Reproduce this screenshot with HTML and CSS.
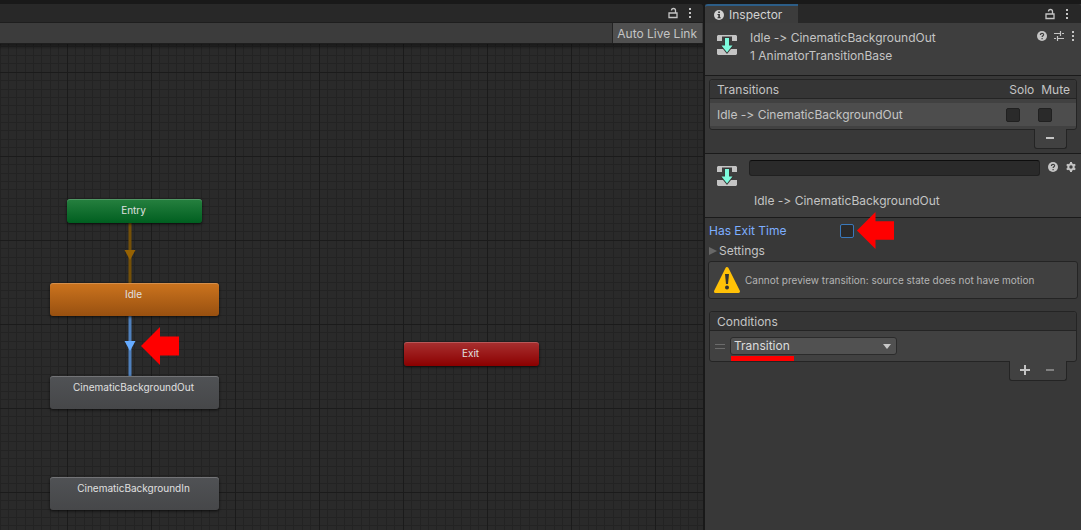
FILE: index.html
```html
<!DOCTYPE html>
<html lang="en">
<head>
<meta charset="utf-8">
<title>Animator</title>
<link rel="stylesheet" href="styles.css">
</head>
<body>
<svg class="defs" aria-hidden="true">
  <symbol id="lock" viewBox="0 0 10 12"><path d="M1 6h8v4.500H1zM7.500 6V3.500Q7.500 1.500 5.500 1.500Q3.500 1.500 3.500 3.500" fill="none" stroke="currentColor" stroke-width="1.300"/></symbol>
  <symbol id="dots" viewBox="0 0 4 12"><path d="M1 1h2v2H1zM1 5h2v2H1zM1 9h2v2H1z" fill="currentColor"/></symbol>
  <symbol id="transition" viewBox="0 0 22 22">
    <path d="M2 1h18l1 1v5h-5V2.500H6V7H1V2zM1 15h20v5l-1 1H2l-1-1z" fill="currentColor"/>
    <path d="M9 4h4v7.500h3.500L11 18.500 5.500 11.500H9z" fill="#7dfbdd" stroke="#383838" stroke-width="2" paint-order="stroke"/>
  </symbol>
  <symbol id="help" viewBox="0 0 10 10"><circle cx="5" cy="5" r="5" fill="currentColor"/><path d="M3.400 3.900C3.400 1.700 6.700 1.800 6.600 3.800C6.500 4.900 5.100 4.700 5.100 6.100M5.100 7v1.300" fill="none" stroke="#3e3e3e" stroke-width="1.200"/></symbol>
  <symbol id="arrow" viewBox="0 0 38 38"><path d="M0 19L19 0v9.500h19v19H19V38z" fill="#f00"/></symbol>
</svg>
<div class="editor">
  <main class="animator">
    <div class="tabs">
      <button class="icon" aria-label="Lock"><svg width="10" height="12"><use href="#lock"/></svg></button>
      <button class="icon" aria-label="Menu"><svg width="4" height="12"><use href="#dots"/></svg></button>
    </div>
    <div class="toolbar"><button class="live">Auto Live Link</button></div>
    <div class="canvas">
      <svg class="grid" aria-hidden="true">
        <defs>
          <pattern id="cells" x="67" y="28" width="84" height="84" patternUnits="userSpaceOnUse">
            <path d="M8.500 0v84M17.500 0v84M25.500 0v84M33.500 0v84M42.500 0v84M50.500 0v84M58.500 0v84M67.500 0v84M75.500 0v84M0 8.500h84M0 17.500h84M0 25.500h84M0 33.500h84M0 42.500h84M0 50.500h84M0 58.500h84M0 67.500h84M0 75.500h84" stroke="#232323"/>
            <path d="M.5 0v84M0 .5h84" stroke="#1b1b1b"/>
          </pattern>
        </defs>
        <rect width="100%" height="100%" fill="url(#cells)"/>
      </svg>
      <svg class="wires" width="12" height="160" aria-hidden="true">
        <path d="M6 0v64" stroke="#755007" stroke-width="3"/><path d="M.5 27h11L6 37z" fill="#966203"/>
        <path d="M6 90v64" stroke="#4f80bd" stroke-width="3"/><path d="M.5 118h11L6 128z" fill="#65abff"/>
      </svg>
      <div class="node small entry">Entry</div>
      <div class="node idle">Idle</div>
      <div class="node out">CinematicBackgroundOut</div>
      <div class="node in">CinematicBackgroundIn</div>
      <div class="node small exit">Exit</div>
      <svg class="pointer" width="38" height="38" aria-hidden="true"><use href="#arrow"/></svg>
    </div>
  </main>
  <aside class="inspector">
    <div class="tabs">
      <div class="tab">
        <svg width="10" height="10" viewBox="0 0 10 10" aria-hidden="true"><circle cx="5" cy="5" r="5" fill="#d2d2d2"/><path d="M4.200 1.600h1.700v1.500H4.200zM3.500 4h2.400v3.200h.8v1H3.500v-1h.8V5h-.8z" fill="#333"/></svg>
        Inspector
      </div>
      <button class="icon" aria-label="Lock"><svg width="10" height="12"><use href="#lock"/></svg></button>
      <button class="icon" aria-label="Menu"><svg width="4" height="12"><use href="#dots"/></svg></button>
    </div>
    <header class="head">
      <svg class="glyph" width="22" height="22" aria-hidden="true"><use href="#transition"/></svg>
      <div class="titles"><div>Idle -&gt; CinematicBackgroundOut</div><div>1 AnimatorTransitionBase</div></div>
      <div class="tools">
        <button class="icon" aria-label="Help"><svg width="10" height="10"><use href="#help"/></svg></button>
        <button class="icon" aria-label="Presets"><svg width="10" height="10" viewBox="0 0 10 10"><path d="M0 2.500h6M8 2.500h2M6.500 0v5M0 7.500h2M4 7.500h6M3.500 5v5" fill="none" stroke="currentColor" stroke-width="1.200"/></svg></button>
        <button class="icon" aria-label="More"><svg width="4" height="12"><use href="#dots"/></svg></button>
      </div>
    </header>
    <section class="block">
      <div class="list">
        <div class="list-head"><span class="grow">Transitions</span><span class="solo">Solo</span><span class="mute">Mute</span></div>
        <div class="list-row">
          <span class="grow">Idle -&gt; CinematicBackgroundOut</span>
          <input class="check" type="checkbox" aria-label="Solo">
          <input class="check last" type="checkbox" aria-label="Mute">
        </div>
      </div>
      <div class="foot"><button class="icon step" aria-label="Remove transition"><svg width="10" height="10" viewBox="0 0 10 10"><path d="M1 5h8" stroke="currentColor" stroke-width="2"/></svg></button></div>
    </section>
    <section class="detail">
      <div class="name-row">
        <svg class="glyph" width="22" height="22" aria-hidden="true"><use href="#transition"/></svg>
        <input class="name" type="text" aria-label="Transition name">
        <button class="icon" aria-label="Help"><svg width="10" height="10"><use href="#help"/></svg></button>
        <button class="icon" aria-label="Options"><svg width="10" height="10" viewBox="0 0 10 10"><circle cx="5" cy="5" r="2.700" fill="none" stroke="currentColor" stroke-width="2"/><path d="M5 0v2M5 8v2M.7 2.500l1.700 1M7.600 6.500l1.700 1M.7 7.500l1.700-1M7.600 3.500l1.700-1" stroke="currentColor" stroke-width="2"/></svg></button>
      </div>
      <div class="subtitle">Idle -&gt; CinematicBackgroundOut</div>
    </section>
    <section class="settings">
      <div class="exit-row">
        <label class="exit-label" for="exit-time">Has Exit Time</label>
        <input class="check focus" type="checkbox" id="exit-time">
        <svg class="pointer-exit" width="37" height="37" aria-hidden="true"><use href="#arrow"/></svg>
      </div>
      <button class="fold"><svg width="8" height="10" viewBox="0 0 8 10" aria-hidden="true"><path d="M0 1l8 4-8 4z" fill="#686868"/></svg>Settings</button>
      <div class="warning">
        <svg width="28" height="28" viewBox="0 0 28 28" aria-hidden="true"><path d="M14 2.500L25.500 25.500h-23z" fill="#ffc107" stroke="#ffc107" stroke-width="3" stroke-linejoin="round"/><path d="M12 8h4l-1 10h-2z" fill="#333"/><circle cx="14" cy="21.500" r="2" fill="#333"/></svg>
        <span>Cannot preview transition: source state does not have motion</span>
      </div>
      <div class="list">
        <div class="list-head">Conditions</div>
        <div class="condition">
          <svg width="10" height="5" viewBox="0 0 10 5" aria-hidden="true"><path d="M0 .5h10M0 4.500h10" stroke="#6b6b6b"/></svg>
          <div class="picker">
            <select class="select" aria-label="Condition parameter"><option>Transition</option></select>
            <svg class="caret" width="8" height="5" viewBox="0 0 8 5" aria-hidden="true"><path d="M0 0h8L4 5z" fill="#c8c8c8"/></svg>
            <i class="mark"></i>
          </div>
        </div>
      </div>
      <div class="foot wide">
        <button class="icon step" aria-label="Add condition"><svg width="10" height="10" viewBox="0 0 10 10"><path d="M0 5h10M5 0v10" stroke="currentColor" stroke-width="2"/></svg></button>
        <button class="icon step dim" aria-label="Remove condition"><svg width="10" height="10" viewBox="0 0 10 10"><path d="M1 5h8" stroke="currentColor" stroke-width="2"/></svg></button>
      </div>
    </section>
  </aside>
</div>
</body>
</html>
```
FILE: styles.css
```css
* { box-sizing: border-box; }
body { margin: 0; background: #191919; color: #c4c4c4; font: 12px/18px Inter, "Open Sans", sans-serif; font-variant-ligatures: none; }
button, input, select { font: inherit; color: inherit; margin: 0; }
svg { display: block; flex: none; }
.defs { position: absolute; width: 0; height: 0; }

.editor { display: flex; gap: 2px; min-height: 100vh; padding-top: 4px; }
.animator { flex: 1; min-width: 0; display: flex; flex-direction: column; }
.inspector { flex: none; width: clamp(320px, 35vw, 376px); background: #383838; }

.icon { display: flex; align-items: center; justify-content: center; padding: 0; border: 0; background: none; color: #c4c4c4; }
.tabs { display: flex; align-items: center; justify-content: flex-end; gap: 10px; height: 19px; padding-right: 12px; background: #282828; border-top-right-radius: 3px; }
.animator .tabs { padding-right: 11px; border-bottom: 1px solid #1e1e1e; }
.tab { display: flex; align-items: center; gap: 5px; height: 19px; margin-right: auto; padding: 0 16px 0 9px; border-top: 2px solid #2c5d87; border-top-left-radius: 3px; background: #3c3c3c; color: #d2d2d2; }

.toolbar { display: flex; justify-content: flex-end; height: 21px; padding-right: 1px; background: #3c3c3c; border-bottom: 1px solid #1e1e1e; }
.live { padding: 2px 5px 0 4px; border: 0; border-left: 1px solid #232323; background: #505050; }

.canvas { position: relative; flex: 1; overflow: hidden; background: #2a2a2a; }
.canvas::before { content: ""; position: absolute; z-index: 1; inset: 0 0 auto; height: 6px; background: linear-gradient(#0006, #0000); }
.grid { position: absolute; inset: 0; width: 100%; height: 100%; }
.wires { position: absolute; left: 124px; top: 179px; }
.node { position: absolute; left: 50px; width: 169px; height: 33px; padding: 2px 2px 0 0; border-radius: 3px; background: linear-gradient(#505255, #464749); box-shadow: inset 0 1px #fff3, 0 1px 3px #000b; color: #e0e0e0; font-size: 10px; line-height: 18px; text-align: center; }
.small { width: 135px; height: 24px; }
.entry { left: 67px; top: 155px; background: linear-gradient(#26803f, #005f20); }
.idle { top: 239px; background: linear-gradient(#cc741e, #985010); }
.out { top: 332px; }
.in { top: 433px; }
.exit { left: 404px; top: 298px; background: linear-gradient(#a83030, #8b0000); }
.pointer { position: absolute; left: 141px; top: 283px; }

.head { display: flex; align-items: flex-start; height: 53px; padding: 6px 6px 0 11px; background: #3e3e3e; border-bottom: 1px solid #1a1a1a; }
.glyph { margin-top: 5px; color: #c4c4c4; }
.titles { flex: 1; padding-left: 12px; }
.tools { display: flex; align-items: center; gap: 7px; padding-top: 1px; }

.block { padding: 3px 4px 4px; border-bottom: 1px solid #1a1a1a; }
.list { border: 1px solid #242424; border-radius: 3px; background: #414141; }
.list-head { display: flex; height: 19px; padding: 1px 6px 0 7px; background: #353535; border-bottom: 1px solid #242424; border-radius: 3px 3px 0 0; }
.grow { flex: 1; }
.solo { width: 32px; }
.list-row { display: flex; align-items: center; height: 23px; margin: 4px 0 3px; padding: 0 24px 0 7px; background: #4d4d4d; }
.check { appearance: none; width: 14px; height: 14px; border: 1px solid #202020; border-radius: 2px; background: #2a2a2a; }
.last { margin-left: 18px; }
.foot { display: flex; justify-content: center; width: 33px; height: 20px; margin: -1px 10px 0 auto; padding-right: 1px; border: 1px solid #242424; border-top: 0; border-radius: 0 0 3px 3px; background: #414141; position: relative; }
.wide { width: 58px; gap: 15px; }
.step { width: 10px; height: 18px; }
.dim { color: #808080; }

.detail { height: 64px; padding: 6px 5px 0 11px; background: #3e3e3e; border-bottom: 1px solid #1a1a1a; }
.name-row { display: flex; align-items: flex-start; gap: 8px; }
.name-row .icon { height: 14px; }
.name { flex: 1; min-width: 0; height: 16px; margin-left: 3px; padding: 0 4px; border: 1px solid #202020; border-top-color: #0d0d0d; border-radius: 3px; background: #2a2a2a; }
.subtitle { padding: 5px 0 0 38px; }

.settings { padding: 3px 4px 0; }
.exit-row { position: relative; display: flex; align-items: center; height: 20px; color: #7daeff; }
.exit-label { width: 131px; }
.focus { border-color: #3a79bb; }
.pointer-exit { position: absolute; left: 148px; top: -9px; z-index: 1; }
.fold { display: flex; align-items: center; gap: 2px; height: 20px; padding: 0; border: 0; background: none; }
.warning { display: flex; align-items: center; gap: 4px; height: 38px; margin: 0 -1px 12px; padding: 0 4px; border: 1px solid #242424; border-radius: 3px; background: #404040; color: #b4b4b4; font-size: 10px; }
.condition { display: flex; align-items: center; gap: 5px; height: 30px; padding-left: 5px; }
.picker { position: relative; }
.select { appearance: none; display: block; width: 167px; height: 18px; padding: 0 20px 0 3px; border: 1px solid #2b2b2b; border-radius: 3px; background: #515151; color: #dcdcdc; line-height: 16px; }
.caret { position: absolute; right: 6px; top: 7px; }
.mark { position: absolute; left: 1px; top: 19px; width: 63px; height: 5px; background: #f00; }
```
